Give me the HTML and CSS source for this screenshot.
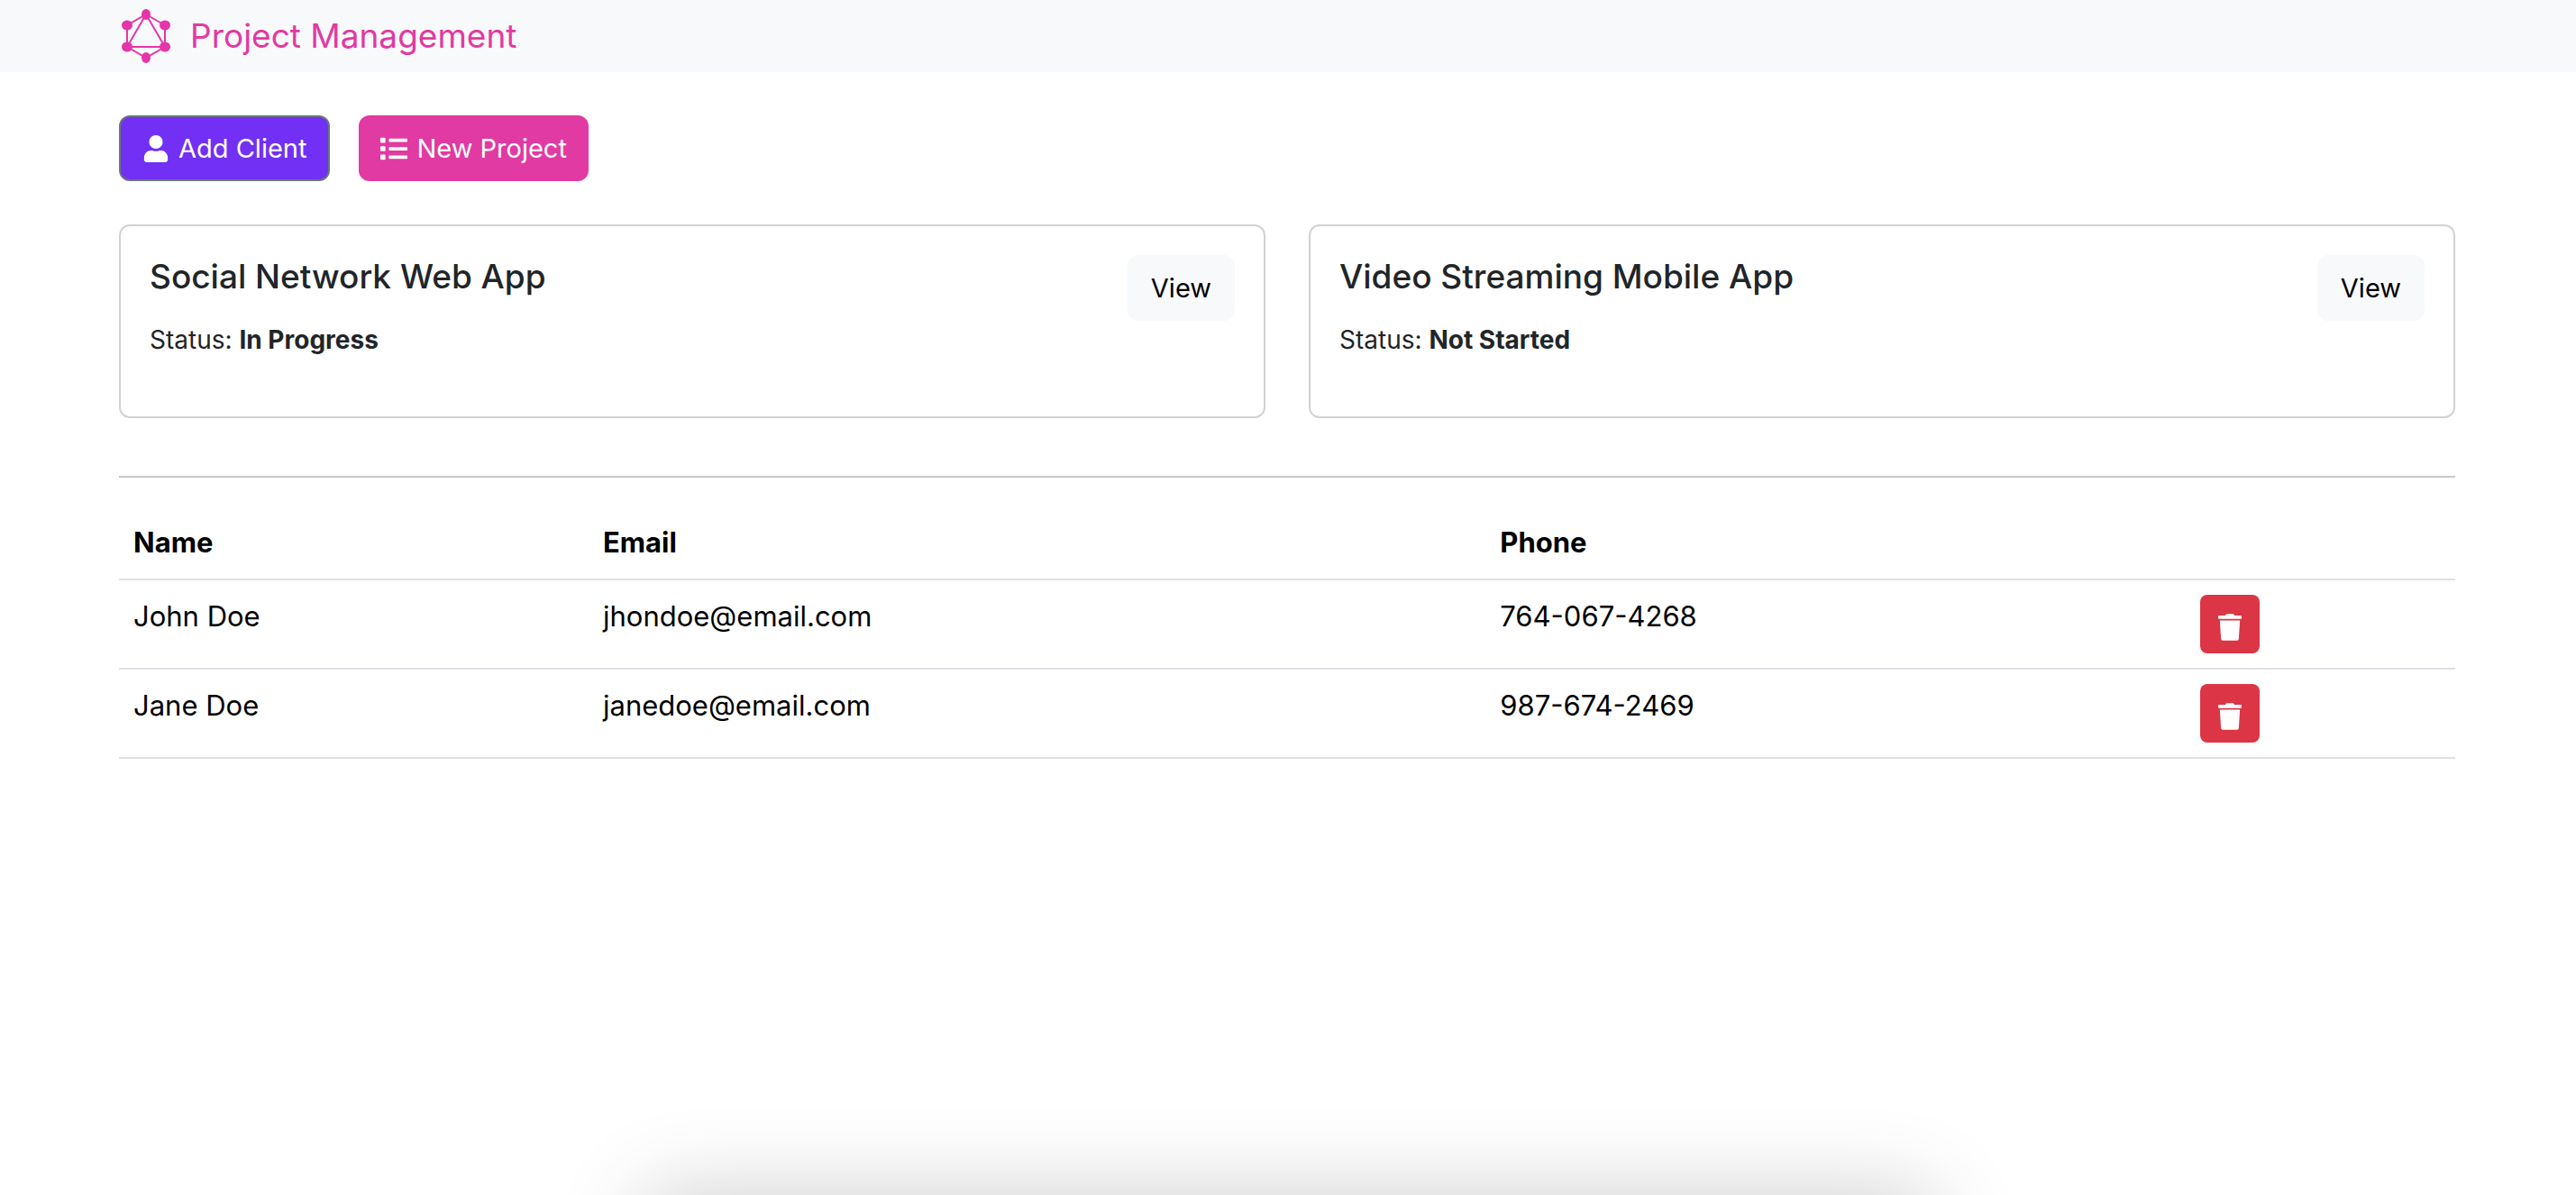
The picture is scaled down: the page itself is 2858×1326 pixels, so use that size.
FILE: index.html
```html
<!DOCTYPE html>
<html lang="en">
<head>
  <meta charset="utf-8">
  <meta name="viewport" content="width=device-width, initial-scale=1">
  <title>Project Management</title>
  <link rel="stylesheet" href="styles.css">
</head>
<body>
  <nav class="navbar">
    <a class="brand" href="#">
      <svg class="brand-logo" viewBox="0 0 54 60" aria-hidden="true">
        <g fill="none" stroke="currentColor" stroke-width="2">
          <path d="M27 6 48 18V42L27 54 6 42V18Z"/>
          <path d="M27 6 48 42H6Z"/>
        </g>
        <g fill="currentColor">
          <ellipse cx="27" cy="6" rx="5" ry="6"/>
          <ellipse cx="48" cy="18" rx="6" ry="5.5"/>
          <ellipse cx="48" cy="42" rx="6" ry="5.5"/>
          <ellipse cx="27" cy="54" rx="5" ry="6"/>
          <ellipse cx="6" cy="42" rx="6" ry="5.5"/>
          <ellipse cx="6" cy="18" rx="6" ry="5.5"/>
        </g>
      </svg>
      <span>Project Management</span>
    </a>
  </nav>

  <main class="container">
    <div class="actions">
      <button class="btn btn-client" type="button">
        <svg class="icon" viewBox="0 0 448 512" aria-hidden="true"><path d="M224 256c70.7 0 128-57.3 128-128S294.7 0 224 0 96 57.3 96 128s57.3 128 128 128zm89.6 32h-16.7c-22.2 10.2-46.9 16-72.9 16s-50.6-5.8-72.9-16h-16.7C60.2 288 0 348.2 0 422.4V464c0 26.5 21.5 48 48 48h352c26.5 0 48-21.5 48-48v-41.6c0-74.2-60.2-134.4-134.4-134.4z"/></svg>
        Add Client
      </button>
      <button class="btn btn-project" type="button">
        <svg class="icon" viewBox="0 0 512 512" aria-hidden="true"><path d="M80 368H16a16 16 0 0 0-16 16v64a16 16 0 0 0 16 16h64a16 16 0 0 0 16-16v-64a16 16 0 0 0-16-16zm0-320H16A16 16 0 0 0 0 64v64a16 16 0 0 0 16 16h64a16 16 0 0 0 16-16V64a16 16 0 0 0-16-16zm0 160H16a16 16 0 0 0-16 16v64a16 16 0 0 0 16 16h64a16 16 0 0 0 16-16v-64a16 16 0 0 0-16-16zm416 176H176a16 16 0 0 0-16 16v32a16 16 0 0 0 16 16h320a16 16 0 0 0 16-16v-32a16 16 0 0 0-16-16zm0-320H176a16 16 0 0 0-16 16v32a16 16 0 0 0 16 16h320a16 16 0 0 0 16-16V80a16 16 0 0 0-16-16zm0 160H176a16 16 0 0 0-16 16v32a16 16 0 0 0 16 16h320a16 16 0 0 0 16-16v-32a16 16 0 0 0-16-16z"/></svg>
        New Project
      </button>
    </div>

    <section class="projects">
      <article class="card">
        <div class="card-head">
          <h5 class="card-title">Social Network Web App</h5>
          <a class="btn btn-light" href="#">View</a>
        </div>
        <p class="status">Status: <strong>In Progress</strong></p>
      </article>
      <article class="card">
        <div class="card-head">
          <h5 class="card-title">Video Streaming Mobile App</h5>
          <a class="btn btn-light" href="#">View</a>
        </div>
        <p class="status">Status: <strong>Not Started</strong></p>
      </article>
    </section>

    <hr class="divider">

    <table class="clients">
      <colgroup>
        <col class="col-name">
        <col class="col-email">
        <col class="col-phone">
        <col>
      </colgroup>
      <thead>
        <tr><th>Name</th><th>Email</th><th>Phone</th><th></th></tr>
      </thead>
      <tbody>
        <tr>
          <td>John Doe</td>
          <td>jhondoe@email.com</td>
          <td>764-067-4268</td>
          <td>
            <button class="btn-delete" type="button" aria-label="Delete John Doe">
              <svg class="icon-trash" viewBox="0 0 448 512" aria-hidden="true"><path d="M432 32H312l-9.4-18.7A24 24 0 0 0 281.1 0H166.8a23.72 23.72 0 0 0-21.4 13.3L136 32H16A16 16 0 0 0 0 48v32a16 16 0 0 0 16 16h416a16 16 0 0 0 16-16V48a16 16 0 0 0-16-16zM53.2 467a48 48 0 0 0 47.9 45h245.8a48 48 0 0 0 47.9-45L416 128H32z"/></svg>
            </button>
          </td>
        </tr>
        <tr>
          <td>Jane Doe</td>
          <td>janedoe@email.com</td>
          <td>987-674-2469</td>
          <td>
            <button class="btn-delete" type="button" aria-label="Delete Jane Doe">
              <svg class="icon-trash" viewBox="0 0 448 512" aria-hidden="true"><path d="M432 32H312l-9.4-18.7A24 24 0 0 0 281.1 0H166.8a23.72 23.72 0 0 0-21.4 13.3L136 32H16A16 16 0 0 0 0 48v32a16 16 0 0 0 16 16h416a16 16 0 0 0 16-16V48a16 16 0 0 0-16-16zM53.2 467a48 48 0 0 0 47.9 45h245.8a48 48 0 0 0 47.9-45L416 128H32z"/></svg>
            </button>
          </td>
        </tr>
      </tbody>
    </table>
  </main>

  <div class="bottom-shadow"></div>
</body>
</html>
```

FILE: styles.css
```css
* {
  box-sizing: border-box;
}

body {
  margin: 0;
  background: #fff;
  color: #212529;
  font-family: Inter, "Liberation Sans", sans-serif;
  font-size: 31px;
  line-height: 48px;
}

.navbar {
  display: flex;
  background: #f8f9fb;
  padding: 10px 134px 10px 135px;
}

.brand {
  display: flex;
  align-items: center;
  gap: 22px;
  color: #e13aa2;
  font-size: 37px;
  line-height: 60px;
  text-decoration: none;
}

.brand-logo {
  width: 54px;
  height: 60px;
  color: #e535ab;
}

.container {
  padding: 48px 134px 48px 132px;
}

.actions {
  display: flex;
  gap: 32px;
  margin-bottom: 48px;
}

.btn {
  display: flex;
  align-items: center;
  gap: 10px;
  padding: 14px 26px;
  border: 0;
  border-radius: 12px;
  font-family: inherit;
  font-size: 29px;
  line-height: 45px;
  text-decoration: none;
  white-space: nowrap;
  cursor: pointer;
}

.btn-client {
  padding: 12px 24px;
  border: 2px solid #6c757d;
  background: #7130f3;
  color: #fff;
}

.btn-project {
  padding: 14px 24px;
  background: #e13aa2;
  color: #fff;
}

.btn-light {
  background: #f8f9fb;
  color: #000;
}

.icon {
  width: 30px;
  height: 30px;
  fill: currentColor;
}

.projects {
  display: grid;
  grid-template-columns: 1fr 1fr;
  gap: 48px;
}

.card {
  padding: 32px;
  border: 2px solid #d2d2d2;
  border-radius: 12px;
}

.card-head {
  display: flex;
  justify-content: space-between;
  align-items: flex-start;
}

.card-title {
  margin: 0;
  font-size: 37px;
  font-weight: 500;
  line-height: 48px;
}

.status {
  margin: 0 0 32px;
  font-size: 28px;
  line-height: 42px;
}

.divider {
  height: 2px;
  margin: 64px 0 32px;
  border: 0;
  background: #c8c8c8;
}

.clients {
  width: 100%;
  border-collapse: separate;
  border-spacing: 0;
  table-layout: fixed;
  color: #000;
}

.clients th,
.clients td {
  padding: 16px;
  border-bottom: 2px solid #dee2e6;
  text-align: left;
  vertical-align: top;
}

.clients th {
  font-weight: 700;
}

.col-name {
  width: 20.1%;
}

.col-email {
  width: 38.4%;
}

.col-phone {
  width: 29.95%;
}

.btn-delete {
  display: block;
  padding: 21px 20px 14px;
  border: 0;
  border-radius: 8px;
  background: #dc3545;
  color: #fff;
  cursor: pointer;
}

.icon-trash {
  display: block;
  width: 26px;
  height: 30px;
  fill: currentColor;
}

/* Soft shadow rising from below the lower window edge */
.bottom-shadow {
  position: fixed;
  top: 100%;
  left: 25%;
  right: 25%;
  height: 200px;
  box-shadow: 0 0 100px rgba(0, 0, 0, 0.2);
  pointer-events: none;
}
```
